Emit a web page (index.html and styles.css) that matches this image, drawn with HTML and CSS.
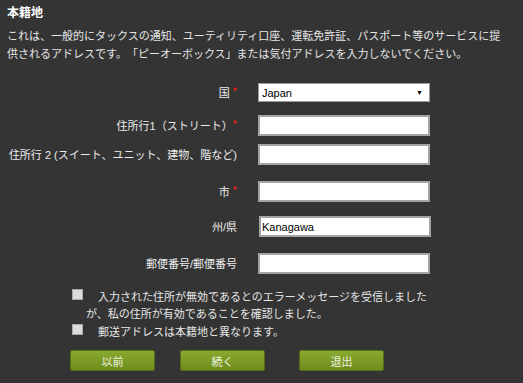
FILE: index.html
```html
<!DOCTYPE html>
<html lang="ja">
<head>
    <meta charset="UTF-8">
    <meta name="viewport" content="width=device-width, initial-scale=1.0">
    <title>本籍地</title>
    <link rel="stylesheet" href="styles.css">
</head>
<body>

    <div class="page">
        <h1 class="title">本籍地</h1>
        <p class="intro">これは、一般的にタックスの通知、ユーティリティ口座、運転免許証、パスポート等のサービスに提供されるアドレスです。「ピーオーボックス」または気付アドレスを入力しないでください。</p>

        <form class="address-form">
            <div class="row row-country">
                <label class="field-label">国 <span class="req">*</span></label>
                <div class="select-wrap">
                    <select class="field">
                        <option>Japan</option>
                    </select>
                    <span class="select-arrow">&#9660;</span>
                </div>
            </div>

            <div class="row row-street">
                <label class="field-label">住所行1（ストリート）<span class="req">*</span></label>
                <input class="field" type="text">
            </div>

            <div class="row">
                <label class="field-label">住所行 2 (スイート、ユニット、建物、階など)</label>
                <input class="field" type="text">
            </div>

            <div class="row row-city">
                <label class="field-label">市 <span class="req">*</span></label>
                <input class="field" type="text">
            </div>

            <div class="row">
                <label class="field-label">州/県</label>
                <input class="field field-state" type="text" value="Kanagawa">
            </div>

            <div class="row row-last">
                <label class="field-label">郵便番号/郵便番号</label>
                <input class="field" type="text">
            </div>

            <!-- Checkboxes -->
            <div class="check">
                <input class="check-box" type="checkbox">入力された住所が無効であるとのエラーメッセージを受信しましたが、私の住所が有効であることを確認しました。
            </div>
            <div class="check check-second">
                <input class="check-box" type="checkbox">郵送アドレスは本籍地と異なります。
            </div>

            <div class="buttons">
                <button class="btn" type="button">以前</button>
                <button class="btn" type="button">続く</button>
                <button class="btn btn-exit" type="button">退出</button>
            </div>
        </form>
    </div>

</body>
</html>
```

FILE: styles.css
```css
body {
    font-family: "Liberation Sans", "Noto Sans CJK JP", sans-serif;
    font-size: 11px;
    background: #343434;
    color: #e6e6e6;
    margin: 0;
    padding: 0;
    text-spacing-trim: space-all;
}

.page {
    padding: 0 7px;
}

.title {
    font-size: 12px;
    font-weight: 700;
    line-height: 14px;
    color: #fff;
    margin: 0;
    padding-top: 6px;
}

.intro {
    max-width: 500px;
    line-height: 18px;
    margin: 7px 0 0;
}

/* Form rows */
.address-form {
    margin-top: 20px;
}

.row {
    display: flex;
    align-items: center;
    margin-bottom: 16px;
}

.row-country {
    margin-bottom: 13px;
}

.row-street {
    margin-bottom: 8px;
}

.row-city {
    margin-bottom: 14px;
}

.row-last {
    margin-bottom: 0;
}

.field-label {
    width: 230px;
    text-align: right;
    line-height: 14px;
    color: #ececec;
    margin-right: 21px;
}

.req {
    color: #ff1a1a;
    font-size: 11px;
    position: relative;
    top: -2px;
}

.field {
    box-sizing: border-box;
    width: 172px;
    height: 21px;
    margin: 0;
    padding: 0 1px;
    border: 2px solid #a3a3a3;
    background: #fff;
    color: #000;
    font-family: "Liberation Sans", "Noto Sans CJK JP", sans-serif;
    font-size: 11px;
    outline: none;
}

.field-state {
    margin-left: 1px;
}

/* Country select */
.select-wrap {
    position: relative;
}

.select-wrap .field {
    display: block;
    height: 19px;
    padding: 0 3px;
    border: 1px solid #9c9c9c;
    appearance: none;
    -webkit-appearance: none;
}

.select-arrow {
    position: absolute;
    right: 7px;
    top: 5px;
    font-size: 7px;
    line-height: 9px;
    color: #000;
    pointer-events: none;
}

/* Checkboxes */
.check {
    width: 346px;
    margin: 15px 0 0 79px;
    line-height: 17px;
}

.check-second {
    margin-top: 1px;
}

.check-box {
    appearance: none;
    -webkit-appearance: none;
    box-sizing: border-box;
    width: 11px;
    height: 11px;
    margin: 0 15px 0 -14px;
    vertical-align: top;
    background: #dcdcdc;
    border: 1px solid #a8a8a8;
}

/* Buttons */
.buttons {
    display: flex;
    gap: 25px;
    margin: 9px 0 0 63px;
}

.btn {
    width: 85px;
    height: 21px;
    padding: 0;
    border: 1px solid #566e14;
    border-radius: 2px;
    background: linear-gradient(#8aa930, #6e8d1e);
    color: #eef3e0;
    font-family: "Liberation Sans", "Noto Sans CJK JP", sans-serif;
    font-size: 11px;
    cursor: pointer;
}

.btn-exit {
    margin-left: 9px;
}
```
